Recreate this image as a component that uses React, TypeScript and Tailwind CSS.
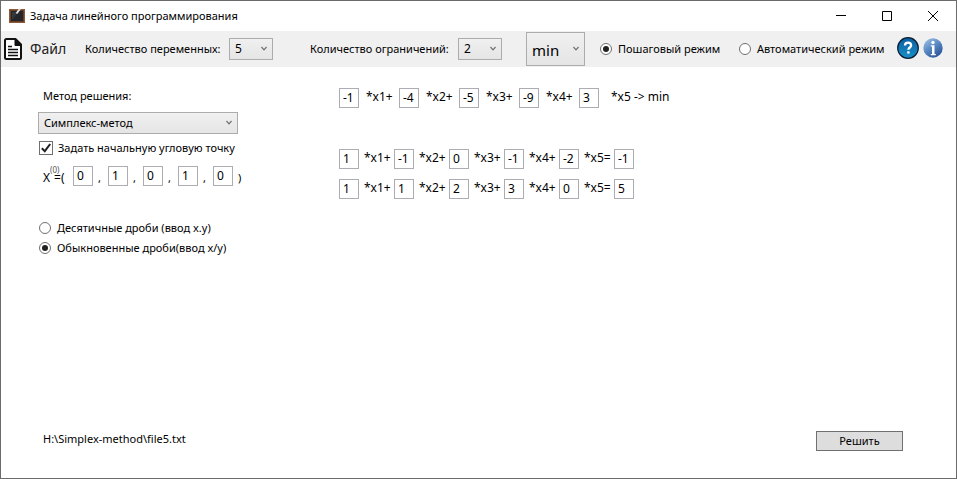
import { useState } from "react";
import type { ReactNode } from "react";

function Chevron() {
  return (
    <svg className="pointer-events-none absolute right-1.5 top-1/2 -mt-[3px] h-1.5 w-1.5" viewBox="0 0 6 6" fill="none" stroke="#707070" strokeWidth="1.2" aria-hidden="true">
      <path d="M0.5 1 L3 3.8 L5.5 1" />
    </svg>
  );
}

function Dropdown({ id, label, options, className }: { id: string; label?: string; options: string[]; className: string }) {
  return (
    <div className="relative shrink-0">
      <select
        id={id}
        aria-label={label}
        className={`block appearance-none rounded-none border border-[#acacac] bg-linear-to-b from-[#f0f0f0] to-[#e5e5e5] pl-[5px] outline-none ${className}`}
      >
        {options.map((o) => (
          <option key={o}>{o}</option>
        ))}
      </select>
      <Chevron />
    </div>
  );
}

function Radio({ name, checked, onChange, children }: { name: string; checked: boolean; onChange: () => void; children: ReactNode }) {
  return (
    <label className="flex shrink-0 items-center gap-1.5 whitespace-nowrap">
      <span className="grid size-3 place-items-center">
        <input
          type="radio"
          name={name}
          checked={checked}
          onChange={onChange}
          className="peer col-start-1 row-start-1 size-3 appearance-none rounded-full border border-[#707070] bg-white"
        />
        <span className="pointer-events-none z-10 col-start-1 row-start-1 hidden size-1.5 rounded-full bg-[#212121] peer-checked:block" />
      </span>
      {children}
    </label>
  );
}

function Cell({ value, label }: { value: string; label: string }) {
  return (
    <input
      type="text"
      aria-label={label}
      defaultValue={value}
      className="block h-5 w-5 shrink-0 border border-[#abadb3] bg-white pb-0.5 pl-[3px] text-xs outline-none"
    />
  );
}

const point = ["0", "1", "0", "1", "0"];
const objective = ["-1", "-4", "-5", "-9", "3"];
const constraints = [
  ["1", "-1", "0", "-1", "-2", "-1"],
  ["1", "1", "2", "3", "0", "5"],
];

function TitleBar() {
  return (
    <header className="flex h-[30px] items-center pl-2">
      <svg className="mr-[5px] size-4 shrink-0" viewBox="0 0 16 16" aria-hidden="true">
        <rect x="0" y="1" width="16" height="14" rx="1" fill="#6b3f26" />
        <rect x="0.5" y="1.5" width="15" height="13" fill="none" stroke="#8a5a3c" />
        <rect x="2" y="3" width="12" height="10" fill="#24262a" />
        <path d="M3 4h6L4 11H3z" fill="#34373c" />
        <path d="M7.500 5.500 L11 0.800" stroke="#e4e4e4" strokeWidth="1.900" />
      </svg>
      <h1 className="whitespace-nowrap">Задача линейного программирования</h1>
      <div className="ml-auto flex h-full">
        <button type="button" aria-label="Свернуть" className="grid w-[46px] place-items-center">
          <svg className="size-2.5" viewBox="0 0 10 10" stroke="#000"><path d="M0 4.5h10" /></svg>
        </button>
        <button type="button" aria-label="Развернуть" className="grid w-[46px] place-items-center">
          <svg className="size-2.5" viewBox="0 0 10 10" fill="none" stroke="#000"><path d="M0.5 0.5h9v9h-9z" /></svg>
        </button>
        <button type="button" aria-label="Закрыть" className="grid w-[46px] place-items-center">
          <svg className="size-2.5" viewBox="0 0 10 10" stroke="#000"><path d="M0 0L10 10M10 0L0 10" /></svg>
        </button>
      </div>
    </header>
  );
}

function Toolbar() {
  const [step, setStep] = useState(true);
  return (
    <div className="flex h-9 items-center bg-[#f0f0f0] pl-[3px]">
      <button type="button" className="flex w-[81px] shrink-0 items-center gap-2 text-[14px] text-[#212121]">
        <svg className="h-[22px] w-[18px]" viewBox="0 0 18 22" fill="none" aria-hidden="true">
          <path d="M2.500 1H11.500L17 6.500V20a1 1 0 0 1-1 1H2.500A1.500 1.500 0 0 1 1 19.500V2.500A1.500 1.500 0 0 1 2.500 1z" fill="#fff" stroke="#111" strokeWidth="2" />
          <path d="M11 1v6.500H17z" fill="#111" stroke="#111" />
          <path d="M4 8.500h4M4 11.500h10M4 14.500h10M4 17.500h10" stroke="#111" strokeWidth="1.400" />
        </svg>
        Файл
      </button>
      <label htmlFor="vars" className="w-36 shrink-0 whitespace-nowrap">Количество переменных:</label>
      <Dropdown id="vars" options={["5", "2", "3", "4"]} className="h-[22px] w-11 text-xs" />
      <label htmlFor="limits" className="ml-[37px] w-37 shrink-0 whitespace-nowrap">Количество ограничений:</label>
      <Dropdown id="limits" options={["2", "1", "3", "4"]} className="h-[22px] w-11 text-xs" />
      <div className="ml-6 mr-[15px] shrink-0">
        <Dropdown id="goal" label="Цель" options={["min", "max"]} className="h-[34px] w-[59px] pt-0.5 text-[15px]" />
      </div>
      <div className="w-[139px] shrink-0">
        <Radio name="mode" checked={step} onChange={() => setStep(true)}>Пошаговый режим</Radio>
      </div>
      <div className="w-[158px] shrink-0">
        <Radio name="mode" checked={!step} onChange={() => setStep(false)}>Автоматический режим</Radio>
      </div>
      <button type="button" aria-label="Справка" className="mb-0.5 mr-1 shrink-0">
        <svg className="size-[22px]" viewBox="0 0 22 22">
          <defs>
            <linearGradient id="help" x1="0" y1="0" x2="0" y2="1">
              <stop offset="0" stopColor="#0b5fa0" />
              <stop offset="1" stopColor="#1990c8" />
            </linearGradient>
          </defs>
          <circle cx="11" cy="11" r="10.300" fill="url(#help)" stroke="#061c33" strokeWidth="1.200" />
          <path d="M8 8.600C8 6.500 9.300 5.700 11 5.700s3.100 1 3.100 2.700c0 2-2.700 2.200-2.700 4.300" fill="none" stroke="#fff" strokeWidth="2.300" />
          <rect x="10.200" y="14.300" width="2.400" height="2.300" fill="#fff" />
        </svg>
      </button>
      <button type="button" aria-label="О программе" className="mb-0.5 shrink-0">
        <svg className="size-5" viewBox="0 0 20 20">
          <defs>
            <linearGradient id="info" x1="0" y1="0" x2="0.700" y2="1">
              <stop offset="0" stopColor="#a9c6e6" />
              <stop offset="0.500" stopColor="#5b8cc4" />
              <stop offset="1" stopColor="#2c529b" />
            </linearGradient>
          </defs>
          <circle cx="10" cy="10" r="9.700" fill="url(#info)" />
          <circle cx="10" cy="4.500" r="1.700" fill="#fff" />
          <path d="M7.800 7.300h3.700v8.700h1.300v1.200H7.800V16H9V8.500H7.800z" fill="#fff" />
        </svg>
      </button>
    </div>
  );
}

function Settings() {
  const [corner, setCorner] = useState(true);
  const [decimal, setDecimal] = useState(false);
  return (
    <section className="flex w-[301px] shrink-0 flex-col items-start">
      <label htmlFor="method" className="mb-2 ml-[5px]">Метод решения:</label>
      <Dropdown id="method" options={["Симплекс-метод", "Графический метод"]} className="h-[22px] w-50" />
      <label className="ml-px mt-1.5 flex items-center gap-[5px] whitespace-nowrap">
        <span className="grid size-3.5 place-items-center">
          <input
            type="checkbox"
            checked={corner}
            onChange={(e) => setCorner(e.target.checked)}
            className="peer col-start-1 row-start-1 size-3.5 appearance-none border border-[#707070] bg-white"
          />
          <svg className="pointer-events-none z-10 col-start-1 row-start-1 hidden size-2.5 peer-checked:block" viewBox="0 0 10 10" fill="none" stroke="#212121" strokeWidth="2">
            <path d="M0.800 5.200L3.800 8.200L9.200 1" />
          </svg>
        </span>
        Задать начальную угловую точку
      </label>
      <div className="mt-2.5 flex items-start">
        <div className="ml-[5px] flex w-[30px] items-end whitespace-nowrap text-xs leading-3">
          <span>X</span>
          <span className="flex flex-col">
            <span className="text-[8px] leading-[8px] text-[#555]">(0)</span>
            <span className="-mt-0.5 pl-1 leading-3">=(</span>
          </span>
        </div>
        {point.map((v, i) => (
          <div key={i} className="flex">
            <Cell value={v} label={`X${i + 1}`} />
            <span className="w-[15px] pl-[5px] pt-1">{i < 4 ? "," : ")"}</span>
          </div>
        ))}
      </div>
      <div className="ml-px mt-[34px] flex flex-col gap-1">
        <Radio name="fractions" checked={decimal} onChange={() => setDecimal(true)}>Десятичные дроби (ввод x.y)</Radio>
        <Radio name="fractions" checked={!decimal} onChange={() => setDecimal(false)}>Обыкновенные дроби(ввод x/y)</Radio>
      </div>
    </section>
  );
}

function Equations() {
  return (
    <section className="text-xs leading-[18px]">
      <div className="flex">
        {objective.map((v, i) => (
          <div key={i} className="flex">
            <Cell value={v} label={`c${i + 1}`} />
            {i < 4 ? (
              <span className="w-10 pl-[7px]">*x{i + 1}+</span>
            ) : (
              <span className="whitespace-nowrap pl-3">*x5 -&gt; min</span>
            )}
          </div>
        ))}
      </div>
      <div className="mt-[41px] flex flex-col gap-2.5">
        {constraints.map((row, r) => (
          <div key={r} className="flex">
            {row.map((v, i) => (
              <div key={i} className="flex">
                <Cell value={v} label={`a${r + 1}${i + 1}`} />
                {i < 5 && <span className="w-[35px] pl-[5px]">*x{i + 1}{i < 4 ? "+" : "="}</span>}
              </div>
            ))}
          </div>
        ))}
      </div>
    </section>
  );
}

export default function App() {
  return (
    <div className="flex min-h-screen flex-col border border-[#6b6b6b] bg-white font-['Noto_Sans','Open_Sans',sans-serif] text-[11px] leading-4 text-black">
      <TitleBar />
      <Toolbar />
      <main className="flex grow pl-[37px] pt-[21px]">
        <Settings />
        <Equations />
      </main>
      <footer className="flex items-start justify-between pb-[27px] pl-[42px] pr-[53px]">
        <span>H:\Simplex-method\file5.txt</span>
        <button type="button" className="h-5 w-[87px] border border-[#707070] bg-[#dddddd]">Решить</button>
      </footer>
    </div>
  );
}
